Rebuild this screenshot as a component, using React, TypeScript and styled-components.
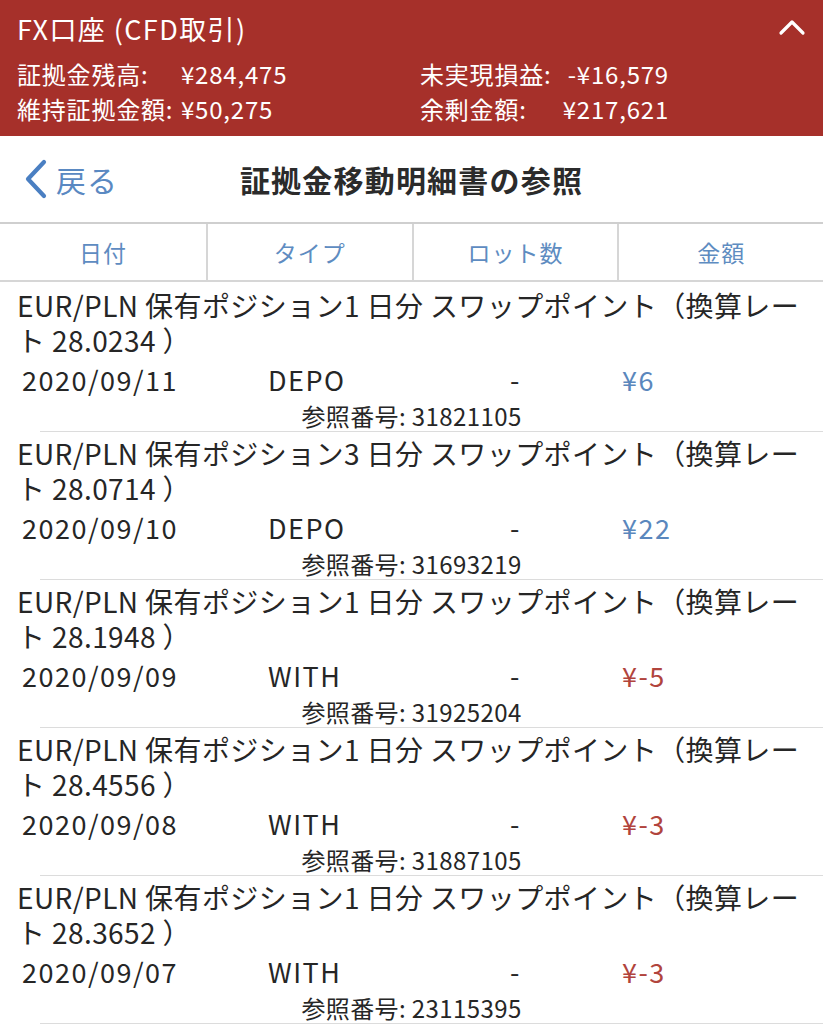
import React from "react";
import styled, { createGlobalStyle } from "styled-components";

const FONT = `"Noto Sans CJK JP", "Noto Sans", sans-serif`;

const Global = createGlobalStyle`
  html, body { margin: 0; padding: 0; background: #ffffff; }
  body { font-family: ${FONT}; width: 823px; height: 1024px; overflow: hidden; }
  * { box-sizing: border-box; }
`;

const Page = styled.div`
  width: 823px;
  display: flex;
  flex-direction: column;
  color: #222;
`;

const AccountPanel = styled.section`
  background: #a6302a;
  color: #fff;
  padding: 6px 17px 10px 17px;
  display: flex;
  flex-direction: column;
  height: 136px;
`;

const AccountTop = styled.div`
  display: flex;
  align-items: center;
  justify-content: space-between;
  height: 44px;
`;

const AccountTitle = styled.h1`
  margin: 0;
  font-size: 27px;
  font-weight: 400;
  letter-spacing: 1.4px;
`;

const SummaryGrid = styled.div`
  display: grid;
  grid-template-columns: 164px 239px 126px 123px;
  grid-auto-rows: 35px;
  align-items: center;
  margin-top: 6px;
  font-size: 24px;
  letter-spacing: 0.8px;
`;

const SummaryCell = styled.span<{ $right?: boolean }>`
  white-space: nowrap;
  text-align: ${(p) => (p.$right ? "right" : "left")};
`;

const NavBar = styled.header`
  height: 86px;
  display: grid;
  grid-template-columns: 140px 1fr 140px;
  align-items: center;
  padding-left: 22px;
`;

const BackButton = styled.button`
  display: flex;
  align-items: center;
  gap: 6px;
  border: none;
  background: none;
  padding: 0;
  color: #5a89c2;
  font-family: ${FONT};
  font-size: 30px;
  letter-spacing: 1px;
  cursor: pointer;
`;

const NavTitle = styled.h2`
  margin: 0 0 0 -22px;
  text-align: center;
  font-size: 30px;
  font-weight: 700;
  letter-spacing: 1.2px;
  color: #2b2b2b;
`;

const ColumnHeader = styled.div`
  display: grid;
  grid-template-columns: repeat(4, 1fr);
  height: 60px;
  border-top: 2px solid #cfcfcf;
  border-bottom: 2px solid #d6d6d6;
`;

const ColumnCell = styled.div`
  display: flex;
  align-items: center;
  justify-content: center;
  color: #5e8cc1;
  font-size: 23px;
  letter-spacing: 1px;
  & + & { border-left: 2px solid #d6d6d6; }
`;

const List = styled.div`
  padding-top: 2px;
  display: flex;
  flex-direction: column;
`;

const Item = styled.article`
  position: relative;
  padding-top: 4px;
  &::after {
    content: "";
    position: absolute;
    left: 40px;
    right: 0;
    bottom: 0;
    height: 1px;
    background: #dcdcdc;
  }
`;

const ItemTitle = styled.div`
  padding: 0 0 0 17px;
  font-size: 28px;
  line-height: 35px;
  color: #262626;
  letter-spacing: 0.4px;
`;

const DataRow = styled.div`
  display: grid;
  grid-template-columns: 246px 242px 112px 1fr;
  height: 42px;
  align-items: center;
  padding-left: 22px;
  font-size: 27px;
  letter-spacing: 1.5px;
  color: #262626;
`;

const Amount = styled.span<{ $negative: boolean }>`
  color: ${(p) => (p.$negative ? "#b1443d" : "#5a87bd")};
`;

const RefRow = styled.div`
  height: 32px;
  line-height: 32px;
  text-align: center;
  font-size: 24px;
  letter-spacing: 0.4px;
  color: #262626;
`;

const ChevronUp = () => (
  <svg width="28" height="20" viewBox="0 0 28 20" fill="none">
    <path d="M3 15 L14 4 L25 15" stroke="#fff" strokeWidth="3.2" strokeLinecap="round" strokeLinejoin="round" />
  </svg>
);

const ChevronLeft = () => (
  <svg width="28" height="40" viewBox="0 0 28 40" fill="none">
    <path d="M22 3 L6 20 L22 37" stroke="#4a7fc2" strokeWidth="4.2" strokeLinecap="round" strokeLinejoin="round" />
  </svg>
);

type Entry = {
  days: number;
  rate: string;
  date: string;
  type: string;
  amount: string;
  ref: string;
};

const entries: Entry[] = [
  { days: 1, rate: "28.0234", date: "2020/09/11", type: "DEPO", amount: "¥6", ref: "31821105" },
  { days: 3, rate: "28.0714", date: "2020/09/10", type: "DEPO", amount: "¥22", ref: "31693219" },
  { days: 1, rate: "28.1948", date: "2020/09/09", type: "WITH", amount: "¥-5", ref: "31925204" },
  { days: 1, rate: "28.4556", date: "2020/09/08", type: "WITH", amount: "¥-3", ref: "31887105" },
  { days: 1, rate: "28.3652", date: "2020/09/07", type: "WITH", amount: "¥-3", ref: "23115395" },
];

export default function App() {
  return (
    <Page>
      <Global />
      <AccountPanel>
        <AccountTop>
          <AccountTitle>FX口座 (CFD取引)</AccountTitle>
          <ChevronUp />
        </AccountTop>
        <SummaryGrid>
          <SummaryCell>証拠金残高:</SummaryCell>
          <SummaryCell>¥284,475</SummaryCell>
          <SummaryCell>未実現損益:</SummaryCell>
          <SummaryCell $right>-¥16,579</SummaryCell>
          <SummaryCell>維持証拠金額:</SummaryCell>
          <SummaryCell>¥50,275</SummaryCell>
          <SummaryCell>余剰金額:</SummaryCell>
          <SummaryCell $right>¥217,621</SummaryCell>
        </SummaryGrid>
      </AccountPanel>

      <NavBar>
        <BackButton>
          <ChevronLeft />
          戻る
        </BackButton>
        <NavTitle>証拠金移動明細書の参照</NavTitle>
        <span />
      </NavBar>

      <ColumnHeader>
        <ColumnCell>日付</ColumnCell>
        <ColumnCell>タイプ</ColumnCell>
        <ColumnCell>ロット数</ColumnCell>
        <ColumnCell>金額</ColumnCell>
      </ColumnHeader>

      <List>
        {entries.map((e) => (
          <Item key={e.ref}>
            <ItemTitle>
              {`EUR/PLN 保有ポジション${e.days} 日分 スワップポイント（換算レート ${e.rate} ）`}
            </ItemTitle>
            <DataRow>
              <span>{e.date}</span>
              <span>{e.type}</span>
              <span>-</span>
              <Amount $negative={e.amount.includes("-")}>{e.amount}</Amount>
            </DataRow>
            <RefRow>{`参照番号: ${e.ref}`}</RefRow>
          </Item>
        ))}
      </List>
    </Page>
  );
}
